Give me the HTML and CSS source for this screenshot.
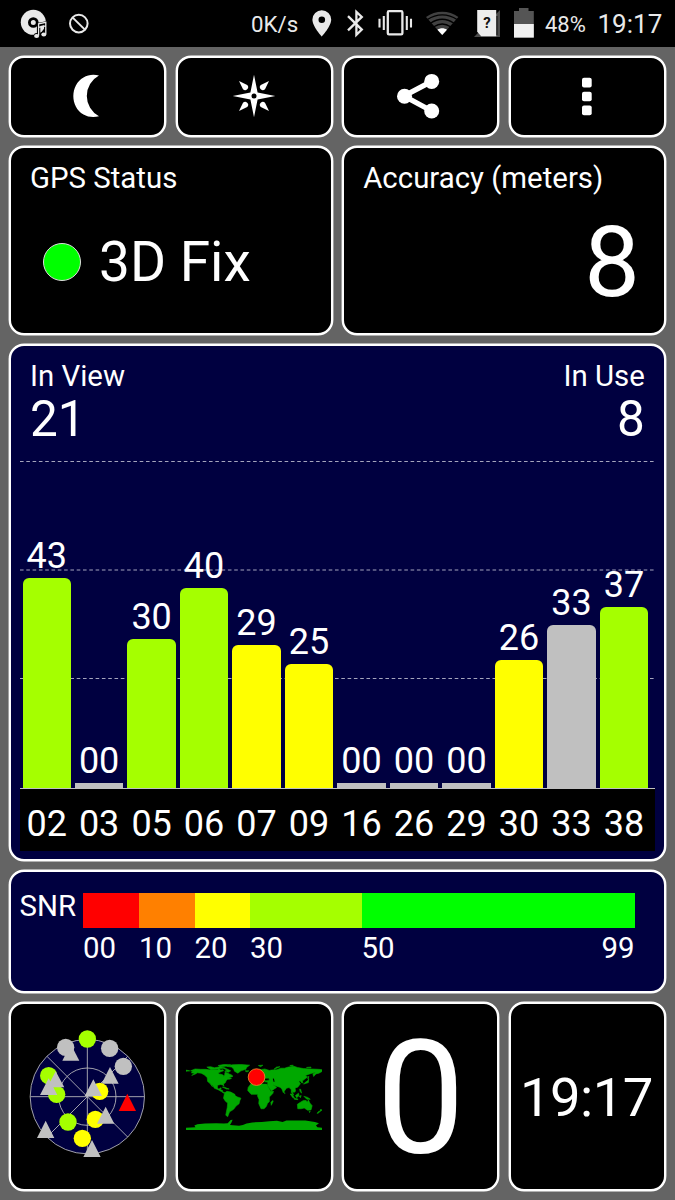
FILE: index.html
```html
<!DOCTYPE html>
<html lang="en">
<head>
<meta charset="utf-8">
<title>GPS Status</title>
<link rel="stylesheet" href="styles.css">
</head>
<body>
<header class="status">
  <svg class="status-left" viewBox="0 0 100 47">
    <circle cx="33.3" cy="22.3" r="12.5" fill="#e9e9e9"/>
    <circle cx="33.3" cy="22.5" r="3.9" fill="none" stroke="#000" stroke-width="2.8"/>
    <g fill="none" stroke="#000" stroke-width="3.4"><path d="M38.600 35V24.500l7.200-1.500v10"/><circle cx="36.500" cy="35.700" r="1"/><circle cx="44" cy="34" r="1"/></g>
    <path d="M38.600 35.500V23.800l7.200-1.400v11.800M38.600 27.300l7.200-1.400" fill="none" stroke="#e9e9e9" stroke-width="1.300"/>
    <ellipse cx="36.600" cy="36" rx="2.500" ry="2" fill="#e9e9e9"/><ellipse cx="43.800" cy="34.400" rx="2.500" ry="2" fill="#e9e9e9"/>
    <circle cx="78.800" cy="23.600" r="8.800" fill="none" stroke="#e9e9e9" stroke-width="2"/>
    <path d="M72.700 17.600l12.200 12" stroke="#e9e9e9" stroke-width="2"/>
  </svg>
  <span class="rate">0K/s</span>
  <svg class="status-icons" viewBox="305 0 235 47">
    <path d="M321.800 10.200a9.400 9.400 0 0 0-9.400 9.400c0 7 9.400 17 9.400 17s9.400-10 9.400-17a9.400 9.400 0 0 0-9.400-9.400zm0 6.200a3.300 3.300 0 1 1 0 6.600a3.300 3.300 0 0 1 0-6.600z" fill="#e9e9e9" fill-rule="evenodd"/>
    <path d="M348 16.200l13.800 13.400-5.400 5.200V11.800l5.400 5.100L348 30.300" fill="none" stroke="#e9e9e9" stroke-width="2.300"/>
    <rect x="387.800" y="11.200" width="14.600" height="23.200" rx="1.200" fill="none" stroke="#e9e9e9" stroke-width="2.300"/>
    <path d="M383.800 16v14M406.800 16v14M379.500 18.800v8.600M411 18.800v8.600" stroke="#e9e9e9" stroke-width="2.100"/>
    <path d="M442.200 35L426 17c9.500-7 23-7 32.400 0z" fill="#414141"/>
    <path d="M427.500 19.500c9-6.300 20.500-6.300 29.500 0M430.400 23.200c7.500-5 16.200-5 23.600 0M433.800 26.800c5.300-3.500 11.600-3.500 16.800 0" fill="none" stroke="#000" stroke-width="1.300"/>
    <path d="M442.200 35l-4.800-5.200c3-2 6.700-2 9.600 0z" fill="#fff"/>
    <path d="M474 37l26-27v27z" fill="#4a4a4a"/><path d="M496 16h1.500v19h-1.500z" fill="#111"/>
    <path d="M477.200 10h19v26.300h-15l-4-4.500z" fill="#ededed"/>
    <text class="sim" x="487" y="28.300">?</text>
    <path d="M514 11h5V8h9.500v3h5.300v26.600H514z" fill="#555"/>
    <path d="M514 24h19.800v13.600H514z" fill="#f0f0f0"/>
  </svg>
  <span class="battery">48%</span>
  <span class="clock">19:17</span>
</header>
<main class="grid">
  <section class="card button"><svg viewBox="0 0 48 48"><path d="M35 3.600C30 2.200 24 2.600 19.500 5.500C6 13 6 35 19.500 42.500C24 45.200 30 45.600 35 44.200A23 23 0 0 1 35 3.600z" fill="#fff"/></svg></section>
  <section class="card button"><svg viewBox="-24 -24 48 48"><g fill="#fff"><path d="M0-21.300L3.600-3.600 21.300 0 3.600 3.600 0 21.300-3.600 3.600-21.300 0-3.600-3.600z"/><path d="M15-15L11-6.800A2.700 2.700 0 1 1 6.800-11z"/><path d="M15 15L6.800 11A2.700 2.700 0 1 1 11 6.800z"/><path d="M-15 15L-11 6.800A2.700 2.700 0 1 1-6.800 11z"/><path d="M-15-15L-6.800-11A2.700 2.700 0 1 1-11-6.800z"/></g><circle r="2.500"/></svg></section>
  <section class="card button"><svg viewBox="0 0 48 48"><path d="M34.700 9.400L7 24l27.700 15" fill="none" stroke="#fff" stroke-width="5.300"/><g fill="#fff"><circle cx="34.700" cy="9.400" r="7.500"/><circle cx="7.500" cy="24.300" r="7.500"/><circle cx="34.700" cy="39" r="7.500"/></g></svg></section>
  <section class="card button"><svg viewBox="0 0 48 48"><g fill="#fff"><rect x="19" y="5.700" width="9.700" height="9.700" rx="2"/><rect x="19" y="19.700" width="9.700" height="9.500" rx="2"/><rect x="19" y="33.500" width="9.700" height="9.700" rx="2"/></g></svg></section>

  <section class="card half">
    <div class="label">GPS Status</div>
    <div class="fix"><i class="led"></i><span>3D Fix</span></div>
  </section>
  <section class="card half">
    <div class="label">Accuracy (meters)</div>
    <div class="accuracy">8</div>
  </section>

  <section class="card chart">
    <div class="counts">
      <div><div class="label">In View</div><div class="count">21</div></div>
      <div class="right"><div class="label">In Use</div><div class="count">8</div></div>
    </div>
    <div class="plot">
      <svg class="rules" viewBox="0 0 637 327"><path d="M0 .500H636M0 109H636M0 217.500H636"/></svg>
      <div class="bars">
        <div class="col"><span>43</span><i class="bar lime" style="height:210px"></i></div>
        <div class="col"><span>00</span><i class="bar none" style="height:5px"></i></div>
        <div class="col"><span>30</span><i class="bar lime" style="height:149px"></i></div>
        <div class="col"><span>40</span><i class="bar lime" style="height:200px"></i></div>
        <div class="col"><span>29</span><i class="bar yellow" style="height:143px"></i></div>
        <div class="col"><span>25</span><i class="bar yellow" style="height:123.700px"></i></div>
        <div class="col"><span>00</span><i class="bar none" style="height:5px"></i></div>
        <div class="col"><span>00</span><i class="bar none" style="height:5px"></i></div>
        <div class="col"><span>00</span><i class="bar none" style="height:5px"></i></div>
        <div class="col"><span>26</span><i class="bar yellow" style="height:128px"></i></div>
        <div class="col"><span>33</span><i class="bar gray" style="height:162.500px"></i></div>
        <div class="col"><span>37</span><i class="bar lime" style="height:180.500px"></i></div>
      </div>
    </div>
    <div class="ids"><span>02</span><span>03</span><span>05</span><span>06</span><span>07</span><span>09</span><span>16</span><span>26</span><span>29</span><span>30</span><span>33</span><span>38</span></div>
  </section>

  <section class="card snr">
    <div class="snr-name">SNR</div>
    <div class="scale">
      <div class="s0"><i></i><span>00</span></div>
      <div class="s10"><i></i><span>10</span></div>
      <div class="s20"><i></i><span>20</span></div>
      <div class="s30"><i></i><span>30</span></div>
      <div class="s50"><i></i><span>50</span><span>99</span></div>
    </div>
  </section>

  <section class="card tile">
    <svg class="sky" viewBox="0 0 390 390">
      <g transform="translate(-39 -66)">
      <g fill="#000040" stroke="#c0c0c0" stroke-width="2.500"><circle cx="232" cy="260" r="171.500"/><circle cx="232" cy="260" r="86"/><path d="M61 260H403M232 89V431M111 139L353 381M111 381L353 139"/></g>
      <g fill="#c0c0c0"><circle cx="167" cy="112" r="26"/><path d="M182 102l26 50h-51z"/></g>
      <circle cx="232" cy="87" r="26" fill="#a5ff00"/>
      <g fill="#c0c0c0"><circle cx="299" cy="115" r="26"/><circle cx="340" cy="169" r="26"/><path d="M300 171l26 50h-51z"/></g>
      <g fill="#a5ff00"><circle cx="116" cy="197" r="26"/><circle cx="140" cy="253" r="26"/><circle cx="174" cy="336" r="26"/></g>
      <g fill="#c0c0c0"><path d="M137 184l26 48h-51zM116 205l26 50h-52z"/></g>
      <g fill="#ff0"><circle cx="269" cy="244" r="26"/><circle cx="256" cy="328" r="26"/><circle cx="217" cy="385" r="26"/></g>
      <g fill="#c0c0c0"><path d="M250 208l26 50h-52zM287 290l26 51h-52zM246 390l26 51h-52zM107 332l26 52h-52z"/></g>
      <path d="M352 251l26 52h-52z" fill="#f00"/>
      </g>
    </svg>
  </section>
  <section class="card tile">
    <svg class="world" viewBox="-180 -84 360 174">
      <g fill="#00a800" transform="scale(1 -1)">
        <g stroke="#00a800" stroke-width="1.600">
        <path d="M-168 66L-156 71-141 70-128 70-115 68-108 68-96 68-94 72-88 68-82 69-81 66-87 64-94 61-94 58-88 57-82 55-80 51-78 56-77 62-72 61-66 58-61 56-56 52-60 50-66 50-60 46-65 44-70 44-74 40-76 35-81 31-80 25-83 29-89 30-97 28-97 22-95 18-91 19-90 21-87 21-89 16-84 15-83 10-78 9-80 7-86 11-95 16-105 20-109 27-114 31-110 24-117 33-123 38-124 48-131 55-140 60-150 61-155 58-165 54-157 59-166 61-162 64z"/>
        <path d="M-125 76L-115 77-105 74-90 77-80 75-72 71-62 66-68 62-78 65-72 68-82 73-90 72-98 70-114 69-119 72zM-95 80L-80 83-62 82-75 78-90 77zM-73 78L-58 82-35 83-12 81-20 75-22 70-35 66-43 60-52 65-54 71-60 76zM-24 66l10 0-5-3zM-84 23l8-1 4-2 6-2-7 0-6 3z"/>
        <path d="M-78 8L-72 12-62 10-51 4-50 0-44-3-35-6-38-13-40-21-48-27-53-34-58-38-65-42-68-50-70-55-75-51-73-40-71-30-70-19-76-14-81-6-80-1z"/>
        <path d="M-10 37L-9 43-2 44-5 48 2 51 8 54 10 58 18 54 28 59 22 60 25 65 18 58 11 57 6 62 15 69 28 71 40 67 45 68 60 69 70 73 80 73 90 76 105 78 114 75 130 72 150 71 170 70 180 69 180 65 171 60 163 58 157 51 155 58 163 62 150 59 135 54 141 50 132 43 127 39 129 35 126 34 121 40 118 38 122 32 115 23 108 21 109 12 105 9 100 13 104 2 98 9 98 16 92 22 85 20 80 13 77 8 73 18 68 23 57 26 49 30 57 24 59 22 45 13 35 28 36 36 27 37 27 40 35 42 41 42 38 47 30 46 27 41 23 36 19 41 13 46 18 40 16 38 8 44 3 43-1 37z"/>
        <path d="M-10 30L-6 36 10 37 20 31 33 31 43 12 51 12 49 6 40-3 40-15 35-20 32-28 26-34 18-34 12-20 13-10 9-1 9 4-8 4-17 14-16 22zM45-25l5 10-1 3-5-5zM-6 50l7 1-1 7-4 1zM50 42l4-6 2 11-5-1z"/>
        <path d="M114-22L122-17 130-12 137-12 140-17 143-11 147-19 153-26 150-37 141-38 132-32 124-34 115-34zM166-46l4 5 4 0-5-5zM173-41l3 6 3-3zM131-1l10-3 7-5-9 0zM109 1l8 6 1-7-6-5zM95 5l5 0 6-10-4 0zM105-6l10-2 0-2-9 1zM119-1l5 2-2-6zM120 18l3-1 2-10-4 5zM130 31l4 4 7 5 3 5-1-10-6-2zM141 46l3 6-1-7zM145-41l3 0-2-3zM52 70l5 2 11 5-9-1zM11 80l12 1-6-4zM94 80l9 1-2-3zM138 75l12 1 0-2zM80 9l2-2-2-1zM-180 68l10-2-10-1z"/>
        </g>
        <path d="M-180-90V-84L-155-83-158-78-150-75-130-73-100-72-80-73-70-72-62-64-57-63-60-70-64-77-40-79-30-77-20-73-5-70 20-69 40-67 60-66 75-69 85-65 110-65 135-65 160-69 171-72 163-78 167-83 180-84V-90z"/>
        <path d="M31 46l8-5-8 0-3 3zM52 46l2-9-3 0-2 8z" fill="#000"/>
      </g>
      <circle cx="6.200" cy="-49.500" r="22" fill="#f00" stroke="#e8902c" stroke-width="2.200"/>
    </svg>
  </section>
  <section class="card tile speed">0</section>
  <section class="card tile time">19:17</section>
</main>
</body>
</html>
```
FILE: styles.css
```css
* { box-sizing: border-box; }
body { margin: 0; width: 675px; height: 1200px; overflow: hidden; background: #646464; color: #fff; font-family: Roboto, sans-serif; }
svg { display: block; }
i { display: block; }
.status { display: flex; height: 47px; background: #000; color: #e9e9e9; line-height: 47px; white-space: nowrap; }
.status-left { width: 100px; height: 47px; }
.rate { width: 54px; margin-left: 151px; font-size: 22.300px; padding-top: 1px; }
.status-icons { width: 235px; height: 47px; }
.battery { width: 52.500px; margin-left: 5px; font-size: 22px; padding-top: 1px; }
.clock { font-size: 26px; padding-top: 1px; }
.sim { font: bold 15px Roboto, sans-serif; text-anchor: middle; fill: #111; }
.grid { display: grid; grid-template-columns: repeat(4, 157.100px); grid-template-rows: 81px 188.500px 517px 122.500px 189px; gap: 9.400px 9.500px; padding: 8.800px 9px; }
.card { border: 2px solid #fff; border-radius: 15px; background: #000; box-shadow: 0 0 0 .4px #fff; min-width: 0; overflow: hidden; }
.button { display: grid; place-items: center; }
.button svg { width: 48px; height: 48px; }
.half { grid-column: span 2; padding: 12px 19px; }
.label { font-size: 29.400px; line-height: 36px; }
.fix { display: flex; align-items: center; gap: 18px; margin: 32px 0 0 13px; font-size: 55px; line-height: 66px; }
.fix span { padding-top: 1px; }
.led { width: 38px; height: 38px; border: 1px solid #ddd; border-radius: 50%; background: #0f0; }
.accuracy { margin-top: 14px; padding-right: 5px; text-align: right; font-size: 99px; line-height: 104px; }
.chart { grid-column: span 4; padding: 11.500px 8.500px 0; background: #000040; }
.counts { display: flex; justify-content: space-between; height: 104px; padding: 0 10.500px; }
.right { text-align: right; }
.count { font-size: 49.500px; line-height: 51px; }
.plot { position: relative; height: 327px; border-bottom: 1px solid #c0c0c0; }
.rules { position: absolute; left: 0; top: -1px; width: 637px; height: 327px; fill: none; stroke: #a5a5bd; stroke-width: 1.200; stroke-dasharray: 3.600 2.700; }
.bars { position: relative; display: flex; gap: 4.200px; height: 100%; padding-left: 3px; align-items: flex-end; }
.col { width: 48.300px; flex: none; text-align: center; font-size: 36px; line-height: 42px; }
.col span { display: block; margin-bottom: .8px; }
.bar { border-radius: 6px 6px 0 0; }
.lime { background: #a5ff00; }
.yellow { background: #ff0; }
.gray { background: #c0c0c0; }
.none { background: #c0c0c0; border-radius: 0; }
.ids { display: flex; gap: 4.200px; height: 62.500px; padding-left: 3px; background: #000; font-size: 36px; line-height: 70.500px; text-align: center; }
.ids span { width: 48.300px; flex: none; }
.snr { grid-column: span 4; display: flex; padding: 21px 0 0 8.500px; background: #000040; font-size: 29.400px; }
.snr-name { width: 63.500px; line-height: 26px; }
.scale { display: grid; grid-template-columns: 56px 55.500px 55.500px 111.500px 273px; }
.scale div { display: flex; flex-wrap: wrap; justify-content: space-between; align-content: flex-start; }
.scale i { width: 100%; height: 34.500px; }
.scale span { line-height: 40px; }
.s0 i { background: #f00; }
.s10 i { background: #ff8000; }
.s20 i { background: #ff0; }
.s30 i { background: #a5ff00; }
.s50 i { background: #0f0; }
.tile { display: grid; place-items: center; }
.sky { width: 130px; height: 130px; overflow: visible; }
.world { width: 136.400px; height: 66px; }
.speed { font-size: 158px; line-height: 180px; padding-top: 2px; }
.time { font-size: 54.500px; line-height: 64px; letter-spacing: -.6px; padding-right: 2px; }
```
